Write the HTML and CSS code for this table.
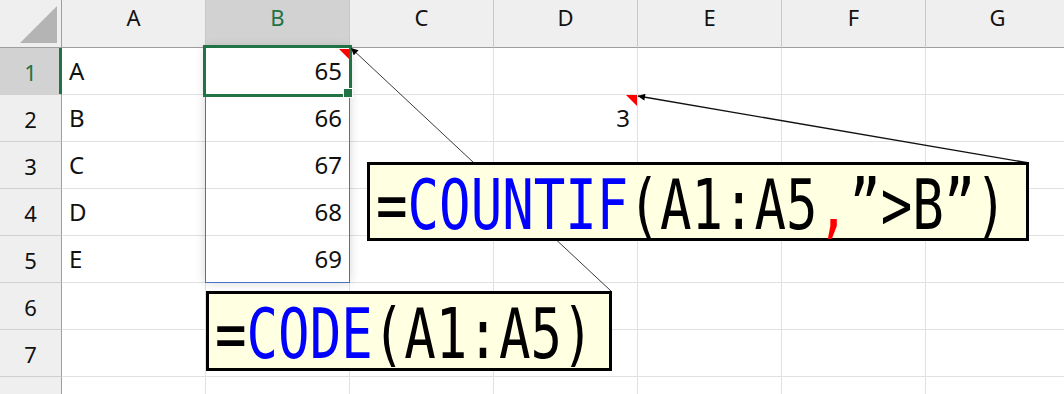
FILE: index.html
```html
<!DOCTYPE html>
<html lang="ja">
<head>
<meta charset="utf-8">
<title>CODE / COUNTIF</title>
<link rel="stylesheet" href="styles.css">
</head>
<body>
<div class="sheet">
  <div class="grid">
    <div class="corner"><svg class="corner-tri" width="62" height="48" viewBox="0 0 62 48"><polygon points="20,43 57,43 57,6" fill="#b4b4b4"/></svg></div>
    <div class="ch">A</div>
    <div class="ch ch-sel">B</div>
    <div class="ch">C</div>
    <div class="ch">D</div>
    <div class="ch">E</div>
    <div class="ch">F</div>
    <div class="ch">G</div>

    <div class="rh rh-sel">1</div>
    <div class="c">A</div>
    <div class="c num">65<span class="note"></span></div>
    <div class="c"></div><div class="c"></div><div class="c"></div><div class="c"></div><div class="c"></div>

    <div class="rh">2</div>
    <div class="c">B</div>
    <div class="c num">66</div>
    <div class="c"></div>
    <div class="c num">3<span class="note note-lg"></span></div>
    <div class="c"></div><div class="c"></div><div class="c"></div>

    <div class="rh">3</div>
    <div class="c">C</div>
    <div class="c num">67</div>
    <div class="c"></div><div class="c"></div><div class="c"></div><div class="c"></div><div class="c"></div>

    <div class="rh">4</div>
    <div class="c">D</div>
    <div class="c num">68</div>
    <div class="c"></div><div class="c"></div><div class="c"></div><div class="c"></div><div class="c"></div>

    <div class="rh">5</div>
    <div class="c">E</div>
    <div class="c num">69</div>
    <div class="c"></div><div class="c"></div><div class="c"></div><div class="c"></div><div class="c"></div>

    <div class="rh">6</div>
    <div class="c"></div><div class="c"></div><div class="c"></div><div class="c"></div><div class="c"></div><div class="c"></div><div class="c"></div>

    <div class="rh">7</div>
    <div class="c"></div><div class="c"></div><div class="c"></div><div class="c"></div><div class="c"></div><div class="c"></div><div class="c"></div>

    <div class="rh">8</div>
    <div class="c"></div><div class="c"></div><div class="c"></div><div class="c"></div><div class="c"></div><div class="c"></div><div class="c"></div>
  </div>

  <div class="range"></div>
  <div class="selection"><span class="handle"></span></div>

  <svg class="leaders" width="1064" height="394" viewBox="0 0 1064 394">
    <defs>
      <marker id="arrow" viewBox="0 0 10 10" refX="10" refY="5" markerWidth="8" markerHeight="7" markerUnits="userSpaceOnUse" orient="auto">
        <path d="M0,0 L10,5 L0,10 z" fill="#000"/>
      </marker>
    </defs>
    <line x1="611" y1="291" x2="351" y2="48" stroke="#3a3a3a" stroke-width="1" marker-end="url(#arrow)"/>
    <line x1="1029" y1="163" x2="638" y2="96" stroke="#111" stroke-width="1.3" marker-end="url(#arrow)"/>
  </svg>

  <div class="callout callout-countif"><span class="formula">=<span class="fn">COUNTIF</span>(A1:A5<span class="sep">,</span>”&gt;B”)</span></div>
  <div class="callout callout-code"><span class="formula">=<span class="fn">CODE</span>(A1:A5)</span></div>
</div>
</body>
</html>
```

FILE: styles.css
```css
html, body {
  margin: 0;
  padding: 0;
  background: #ffffff;
  overflow: hidden;
}

.sheet {
  position: relative;
  width: 1064px;
  height: 394px;
  overflow: hidden;
}

.grid {
  display: grid;
  grid-template-columns: 62px repeat(7, 144px);
  grid-template-rows: 48px repeat(8, 47px);
  font-family: "Noto Sans", "Noto Sans CJK JP", sans-serif;
}

.grid > div {
  box-sizing: border-box;
}

.corner {
  background: #efefef;
  border-right: 1px solid #9e9e9e;
  border-bottom: 1px solid #9e9e9e;
  position: relative;
}

.corner-tri {
  display: block;
}

.ch {
  background: #efefef;
  border-right: 1px solid #c8c8c8;
  border-bottom: 1px solid #9e9e9e;
  text-align: center;
  font-size: 22px;
  line-height: 35px;
  color: #111;
}

.ch-sel {
  background: #d2d2d2;
  color: #217346;
}

.rh {
  background: #efefef;
  border-right: 1px solid #9e9e9e;
  border-bottom: 1px solid #d0d0d0;
  text-align: center;
  font-size: 22px;
  line-height: 46px;
  padding-top: 1px;
  color: #111;
}

.rh-sel {
  background: #d2d2d2;
  color: #217346;
  border-right-color: #217346;
  box-shadow: inset -2px 0 0 #217346;
}

.c {
  position: relative;
  border-right: 1px solid #e1e1e1;
  border-bottom: 1px solid #e1e1e1;
  font-size: 24px;
  line-height: 46px;
  padding: 0 7px;
  color: #111;
  white-space: nowrap;
}

.num {
  text-align: right;
}

.note {
  position: absolute;
  top: 1px;
  right: 0;
  width: 0;
  height: 0;
  border-top: 10px solid #ff0000;
  border-left: 10px solid transparent;
}

.note-lg {
  top: 0;
  border-top-width: 11px;
  border-left-width: 11px;
}

.range {
  position: absolute;
  left: 205px;
  top: 47px;
  width: 145px;
  height: 236px;
  box-sizing: border-box;
  border: 1px solid #4472c4;
  box-shadow: 0 0 10px rgba(0, 0, 0, 0.16);
}

.selection {
  position: absolute;
  left: 203px;
  top: 45px;
  width: 149px;
  height: 52px;
  box-sizing: border-box;
  border: 3px solid #217346;
}

.handle {
  position: absolute;
  right: -4px;
  bottom: -4px;
  width: 8px;
  height: 8px;
  background: #217346;
  border: 1px solid #ffffff;
}

.leaders {
  position: absolute;
  left: 0;
  top: 0;
  pointer-events: none;
}

.callout {
  position: absolute;
  box-sizing: border-box;
  border: 3px solid #000;
  background: #ffffe1;
  height: 79px;
  padding: 5px 0 0 6px;
  white-space: nowrap;
}

.callout-countif {
  left: 367px;
  top: 162px;
  width: 662px;
}

.callout-code {
  left: 206px;
  top: 291px;
  width: 406px;
  height: 80px;
}

.formula {
  display: inline-block;
  font-family: "DejaVu Sans Mono", "Liberation Mono", monospace;
  font-size: 52.4px;
  line-height: 52px;
  color: #000;
  transform: scaleY(1.335);
  transform-origin: 0 0;
}

.fn {
  color: #0000ff;
}

.sep {
  color: #ff0000;
}
```
